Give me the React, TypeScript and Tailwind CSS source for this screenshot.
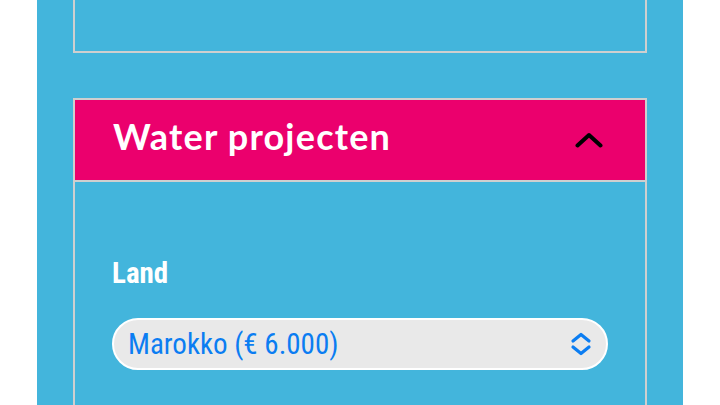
import React from "react";

export default function App() {
  return (
    <div className="min-h-screen bg-white">
      <div className="mx-[37px] h-[405px] overflow-hidden bg-[#43b5dc] px-[36px]">
        <div className="h-[53px] border-2 border-t-0 border-[#cfcfcf]" />
        <div className="mt-[45px] border-2 border-[#cfcfcf]">
          <div className="flex h-[82px] items-center justify-between border-b-2 border-[#cfcfcf] bg-[#eb006d] pl-[38px] pr-[42px]">
            <h2
              className="mb-[8px] text-[36px] font-bold text-white leading-none tracking-[1.2px]"
              style={{ fontFamily: "Lato, 'Noto Sans', sans-serif" }}
            >
              Water projecten
            </h2>
            <svg width="28" height="16" viewBox="0 0 28 16" fill="none">
              <polyline
                points="2.5,13.5 14,3 25.5,13.5"
                stroke="#000"
                strokeWidth="4"
                strokeLinecap="round"
                strokeLinejoin="round"
              />
            </svg>
          </div>
          <div className="px-[37px] pt-[74px] pb-[40px]">
            <label
              className="block text-[29px] font-bold leading-[35px] text-white"
              style={{ fontFamily: "'Roboto Condensed', Roboto, sans-serif", fontStretch: "condensed" }}
            >
              Land
            </label>
            <div className="mt-[27px] flex h-[52px] items-center justify-between rounded-full border-2 border-white bg-[#e9e9e9] pl-[14px] pr-[14px]">
              <span
                className="text-[29px] leading-none text-[#0b7df2]"
                style={{ fontFamily: "'Roboto Condensed', Roboto, sans-serif", fontStretch: "condensed" }}
              >
                Marokko (€ 6.000)
              </span>
              <svg width="22" height="24" viewBox="0 0 22 24" fill="none">
                <polyline
                  points="3,9 11,2.5 19,9"
                  stroke="#0b7df2"
                  strokeWidth="3.2"
                  strokeLinecap="round"
                  strokeLinejoin="round"
                />
                <polyline
                  points="3,15 11,21.5 19,15"
                  stroke="#0b7df2"
                  strokeWidth="3.2"
                  strokeLinecap="round"
                  strokeLinejoin="round"
                />
              </svg>
            </div>
          </div>
        </div>
      </div>
    </div>
  );
}
